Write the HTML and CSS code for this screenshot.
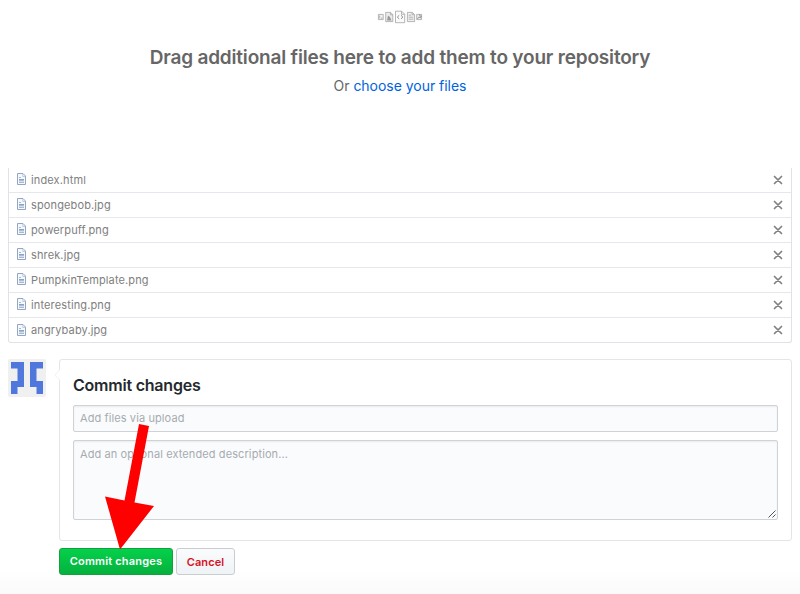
FILE: index.html
```html
<!DOCTYPE html>
<html lang="en">
<head>
<meta charset="utf-8">
<title>Upload files</title>
<link rel="stylesheet" href="styles.css">
</head>
<body>
<svg class="defs" aria-hidden="true">
  <symbol id="file" viewBox="0 0 11 13">
    <path d="M1.500.5h5.500L9.500 3v8.500h-8z" fill="#f6f9fc" stroke="#93a6c6"/>
    <path d="M6.800 1v2.500h2.700" fill="none" stroke="#b4c1d7" stroke-width=".8"/>
    <path d="M3 4.500h2M3 9.500h5" stroke="#a9b8d1"/>
    <path d="M3 6.500h5M3 7.800h5" stroke="#8199bf" stroke-width=".9"/>
  </symbol>
  <symbol id="close" viewBox="0 0 10 10">
    <path d="M1.500 1.500l7 7M8.500 1.500l-7 7" stroke="#808080" stroke-width="1.700" stroke-linecap="round"/>
  </symbol>
</svg>
<main class="page">
  <section class="drop">
    <svg class="drop-icons" width="46" height="14" viewBox="0 0 46 14" fill="none" stroke="#a3a3a3" stroke-width=".8">
      <path d="M1.400 4.400h4.800v5.200H1.400z" fill="#f3f3f3"/><path d="M2.700 5.500v3M4 8.200h1.500" />
      <path d="M8.700 2.400h5l2.100 2.200v7H8.700z" fill="#ededed"/><path d="M13.400 2.500v2.300h2.300"/><path d="M10 10.500l1-5 2 1.600 1.500 3.400z" fill="#999" stroke="none"/>
      <path d="M18.500 1.200h6.200l3 3v8.500h-9.200z" fill="#fafafa"/><path d="M24.500 1.300v3h3"/><path d="M22.200 5.300l-1.900 1.800 1.900 1.800M24 5.300l1.900 1.800L24 8.900" stroke="#777"/>
      <path d="M30.400 2.400h4.900l2.300 2.200v7h-7.200z" fill="#f1f1f1"/><path d="M35.100 2.500v2.300h2.300M31.700 5.200h2.500M31.700 7.200h4.600M31.700 9.200h4.600"/>
      <path d="M39.700 4.400h4.900v5.200h-4.900z" fill="#eee"/><path d="M40.300 9l1.800-2 1.100 1 1.200-1.500M42.800 4.500v1.700h1.500" stroke="#858585"/>
    </svg>
    <h1 class="drop-title">Drag additional files here to add them to your repository</h1>
    <p class="drop-sub">Or <a class="link">choose your files</a></p>
  </section>

  <ul class="files">
    <li class="file"><svg class="file-icon"><use href="#file"/></svg><span class="name">index.html</span><svg class="close"><use href="#close"/></svg></li>
    <li class="file"><svg class="file-icon"><use href="#file"/></svg><span class="name">spongebob.jpg</span><svg class="close"><use href="#close"/></svg></li>
    <li class="file"><svg class="file-icon"><use href="#file"/></svg><span class="name">powerpuff.png</span><svg class="close"><use href="#close"/></svg></li>
    <li class="file"><svg class="file-icon"><use href="#file"/></svg><span class="name">shrek.jpg</span><svg class="close"><use href="#close"/></svg></li>
    <li class="file"><svg class="file-icon"><use href="#file"/></svg><span class="name">PumpkinTemplate.png</span><svg class="close"><use href="#close"/></svg></li>
    <li class="file"><svg class="file-icon"><use href="#file"/></svg><span class="name">interesting.png</span><svg class="close"><use href="#close"/></svg></li>
    <li class="file"><svg class="file-icon"><use href="#file"/></svg><span class="name">angrybaby.jpg</span><svg class="close"><use href="#close"/></svg></li>
  </ul>

  <section class="commit">
    <svg class="avatar" width="38" height="38" viewBox="0 0 38 38">
      <rect width="38" height="38" rx="2" fill="#f0f0f0"/>
      <path fill="#5078dc" d="M3 3h13v25h-6.500v7H3V22h6.500V9.500H3zM22 3h13v6.500h-6.500V22H35v13h-6.500v-7H22z"/>
    </svg>
    <div class="form">
      <div class="panel">
        <svg class="caret" width="7" height="14" viewBox="0 0 7 14"><path d="M7 0L1 7l6 7z" fill="#fff"/><path d="M6.500 1L.8 7l5.700 6" fill="none" stroke="#f0f1f2"/></svg>
        <h2 class="panel-title">Commit changes</h2>
        <div class="field summary">Add files via upload</div>
        <div class="field description">Add an optional extended description...
          <svg class="grip" width="8" height="8" viewBox="0 0 8 8"><path d="M.5 7.500l7-7M4.500 7.500l3-3" stroke="#555" fill="none"/></svg>
        </div>
      </div>
      <div class="actions">
        <button class="btn primary">Commit changes</button>
        <button class="btn danger">Cancel</button>
      </div>
    </div>
  </section>
  <svg class="arrow" width="50" height="126" viewBox="0 0 50 126"><path d="M34 0L44 2 29.500 78.500 49 82 15 125.500 0 72.500l19.500 4z" fill="#f00"/></svg>
</main>
</body>
</html>
```
FILE: styles.css
```css
* { box-sizing: border-box; }
body {
  margin: 0;
  font: 11px/16px Inter, "Liberation Sans", sans-serif;
  color: #24292e;
  background: #fff;
}
.defs { position: absolute; width: 0; height: 0; }
.page {
  position: relative;
  height: 594px;
  padding: 0 8px;
  overflow: hidden;
  background: linear-gradient(#fff 570px, #fafafa 594px);
}
.drop {
  display: flex;
  flex-direction: column;
  align-items: center;
  height: 168px;
  padding-top: 10px;
  color: #666;
}
.drop-icons { flex: none; }
.drop-title {
  margin: 21px 0 0;
  font-size: 19px;
  line-height: 26px;
  font-weight: 600;
  letter-spacing: -.185px;
  white-space: nowrap;
}
.drop-sub {
  margin: 5px 0 0;
  font-size: 14px;
  line-height: 20px;
  letter-spacing: -.03px;
}
.link { color: #0062e0; }
.files {
  margin: 0;
  padding: 0;
  list-style: none;
  border: 1px solid #dfe2e8;
  border-top: 0;
  border-radius: 0 0 3px 3px;
}
.file {
  display: flex;
  align-items: center;
  height: 25px;
  padding: 0 8px 1px 7px;
  border-bottom: 1px solid #e5e7ec;
}
.file:last-child { height: 24px; padding-bottom: 0; border-bottom: 0; }
.file-icon { width: 11px; height: 13px; margin-right: 4px; }
.name { color: #808080; letter-spacing: .13px; }
.close { width: 10px; height: 10px; margin-left: auto; }
.commit { display: flex; gap: 13px; margin-top: 16px; }
.avatar { flex: none; }
.form { flex: 1; }
.panel {
  position: relative;
  height: 182px;
  padding: 15px 13px;
  border: 1px solid #e3e5e8;
  border-radius: 3px;
}
.caret { position: absolute; left: -6px; top: 8px; }
.panel-title {
  margin: 0 0 9px;
  font-size: 16px;
  line-height: 21px;
  font-weight: 600;
  letter-spacing: -.22px;
}
.field {
  position: relative;
  padding: 5px 6px;
  border: 1px solid #cfd3d8;
  border-radius: 2px;
  background: #fafbfc;
  box-shadow: inset 0 1px 2px rgba(27, 31, 35, .07);
  color: #a6abb1;
  letter-spacing: .1px;
}
.summary { height: 27px; padding-top: 4px; margin-bottom: 8px; }
.description { height: 80px; }
.grip { position: absolute; right: 1px; bottom: 1px; }
.actions { display: flex; gap: 3px; margin-top: 7px; }
.btn {
  height: 27px;
  padding: 0;
  border: 1px solid #c9cdd2;
  border-radius: 3px;
  font: 600 11px/16px Inter, "Liberation Sans", sans-serif;
  letter-spacing: .1px;
}
.primary {
  width: 114px;
  padding-bottom: 2px;
  letter-spacing: .2px;
  border-color: #12a13c;
  background: linear-gradient(#04d14a, #05b13e);
  color: #fff;
}
.danger {
  width: 59px;
  padding-top: 1px;
  background: linear-gradient(#fafbfc, #eff3f6);
  color: #d8101f;
}
.arrow { position: absolute; left: 105px; top: 424px; }
```
